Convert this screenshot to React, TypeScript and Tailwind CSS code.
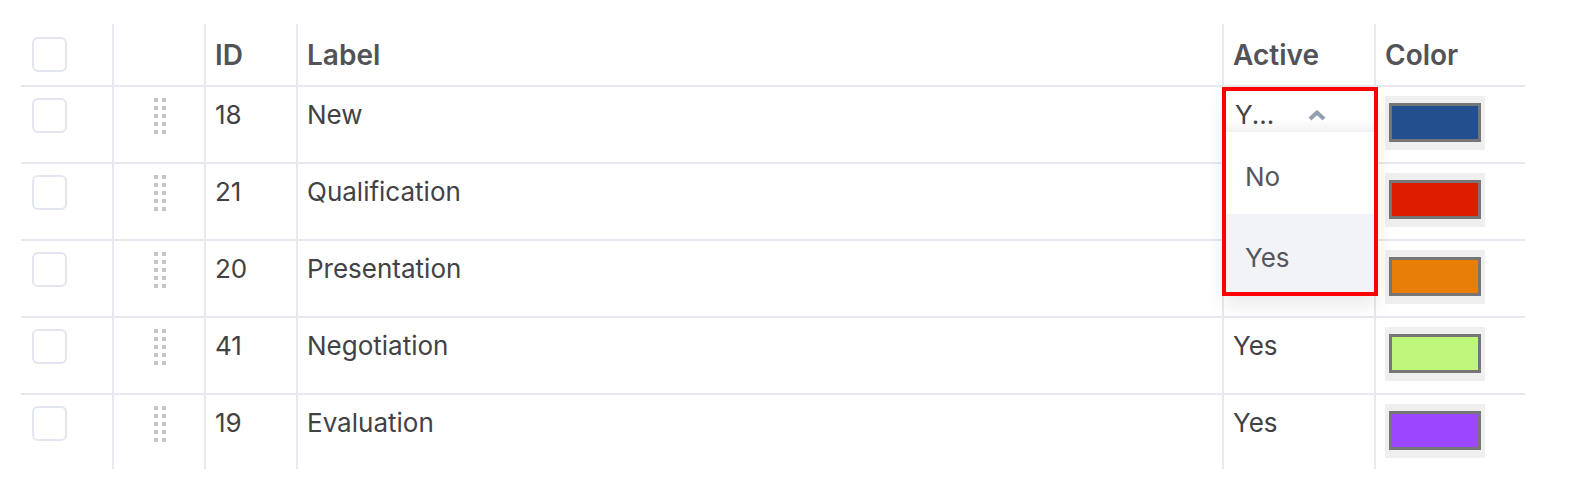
const ROWS = [
  { id: 18, label: "New", active: "Yes", color: "#22508f" },
  { id: 21, label: "Qualification", active: "Yes", color: "#dd1c00" },
  { id: 20, label: "Presentation", active: "Yes", color: "#e87e05" },
  { id: 41, label: "Negotiation", active: "Yes", color: "#bef77a" },
  { id: 19, label: "Evaluation", active: "Yes", color: "#9a47ff" },
];

// rows whose Active cell sits under the open dropdown
const COVERED = 3;

function Checkbox() {
  return <div className="h-[35px] w-[35px] rounded-[6px] border-2 border-[#e3e6f0] bg-white" />;
}

function DragHandle() {
  return (
    <div className="grid grid-cols-[4px_4px] grid-rows-[4px_4px_4px_4px_4px] gap-x-[4px] gap-y-[4px] self-start">
      {Array.from({ length: 10 }).map((_, i) => (
        <span key={i} className="block h-[4px] w-[4px] bg-[#c6c6c6]" />
      ))}
    </div>
  );
}

function Swatch({ color }: { color: string }) {
  return (
    <div className="flex h-[54px] w-[100px] items-start bg-[#efefef] px-[4px] pt-[7px]">
      <div className="h-[39px] w-full border-[3px] border-[#767676]" style={{ backgroundColor: color }} />
    </div>
  );
}

function ActiveDropdown() {
  return (
    <div className="absolute left-[-2px] top-0 z-10 w-[156px] border-4 border-[#ff0000] bg-white shadow-[0_10px_18px_rgba(0,0,0,0.08)]">
      <div className="flex h-[41px] items-start justify-between bg-gradient-to-b from-white from-70% to-[#f1f2f4] pl-[9px] pr-[48px] pt-[5px]">
        <span className="leading-[37px]">Y...</span>
        <svg width="18" height="11" viewBox="0 0 18 11" className="mt-[14px]">
          <path d="M2 9 L9 2.5 L16 9" fill="none" stroke="#93a0b2" strokeWidth="4" strokeLinejoin="miter" />
        </svg>
      </div>
      <div className="h-[82px] pl-[19px] pt-[26px] leading-[37px] text-[#55565c]">No</div>
      <div className="h-[78px] bg-[#f2f3f7] pl-[19px] pt-[25px] leading-[37px] text-[#55565c]">Yes</div>
    </div>
  );
}

export default function App() {
  return (
    <div className="min-h-screen bg-white pl-[21px] pt-[24px] font-['Inter',sans-serif] text-[26px] text-[#424245]">
      <div className="w-[1504px]">
        {/* header */}
        <div className="flex h-[63px] items-center border-b-2 border-[#e6eaf0] text-[28px] font-semibold text-[#535357]">
          <div className="flex h-full w-[91px] items-center pl-[11px]">
            <Checkbox />
          </div>
          <div className="h-full w-[92px] border-l-2 border-[#e6eaf0]" />
          <div className="flex h-full w-[92px] items-center border-l-2 border-[#e6eaf0] pl-[9px]">ID</div>
          <div className="flex h-full w-[926px] items-center border-l-2 border-[#e6eaf0] pl-[9px]">Label</div>
          <div className="flex h-full w-[152px] items-center border-l-2 border-[#e6eaf0] pl-[9px]">Active</div>
          <div className="flex h-full w-[151px] items-center border-l-2 border-[#e6eaf0] pl-[9px]">Color</div>
        </div>

        {ROWS.map((r, i) => (
          <div
            key={r.id}
            className={`flex ${i === ROWS.length - 1 ? "h-[74px]" : "h-[77px] border-b-2 border-[#e6eaf0]"}`}
          >
            <div className="w-[91px] pl-[11px] pt-[11px]">
              <Checkbox />
            </div>
            <div className="flex w-[92px] items-start justify-center border-l-2 border-[#e6eaf0] pl-[2px] pt-[11px]">
              <DragHandle />
            </div>
            <div className="w-[92px] border-l-2 border-[#e6eaf0] pl-[9px] pt-[9px] leading-[37px]">{r.id}</div>
            <div className="w-[926px] border-l-2 border-[#e6eaf0] pl-[9px] pt-[9px] leading-[37px]">{r.label}</div>
            <div className="relative w-[152px] border-l-2 border-[#e6eaf0] pl-[9px] pt-[9px] leading-[37px]">
              {i === 0 ? <ActiveDropdown /> : i < COVERED ? null : r.active}
            </div>
            <div className="w-[151px] border-l-2 border-[#e6eaf0] pl-[9px] pt-[9px]">
              <Swatch color={r.color} />
            </div>
          </div>
        ))}
      </div>
    </div>
  );
}
